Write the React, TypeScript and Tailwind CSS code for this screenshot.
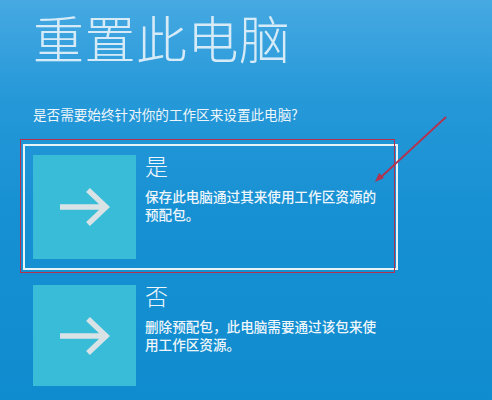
import React from "react";

const cjk = { fontFamily: '"Noto Sans CJK SC", "Noto Sans", sans-serif' };

// arrow glyph on the tile
function TileArrow() {
    return (
        <svg width="50" height="38" viewBox="0 0 50 38">
            <path d="M0 19 H44 M28 2 L46 19 L28 36" stroke="#d9e3e5" strokeWidth="5.5" fill="none" />
        </svg>
    );
}

function Option({ title, desc, h }: { title: string; desc: string[]; h: string }) {
    return (
        <div className="flex gap-[9px]">
            <div className={`w-[103px] ${h} shrink-0 bg-[#38bcd8] flex items-center justify-center`}>
                <TileArrow />
            </div>
            <div className="-mt-[4px] text-[#eef6fb]">
                <div className="text-[23px] leading-[28px] font-light">{title}</div>
                <div className="mt-[8px] text-[13.6px] leading-[18px] font-medium">
                    {desc.map((d) => (
                        <div key={d}>{d}</div>
                    ))}
                </div>
            </div>
        </div>
    );
}

export default function App() {
    return (
        <div
            style={cjk}
            className="relative w-[492px] h-[400px] overflow-hidden bg-[linear-gradient(180deg,#46a9e2_0%,#2598d8_25%,#1690d3_55%,#0f8ccf_100%)]"
        >
            <div className="px-[33px] pt-[4px]">
                {/* title */}
                <h1 className="text-[51px] leading-[66px] font-extralight tracking-[0.5px] text-[#d6ebf7]">重置此电脑</h1>
                <p className="mt-[34px] text-[13.6px] leading-[20px] text-[#eef6fb]">是否需要始终针对你的工作区来设置此电脑?</p>

                {/* selected option */}
                <div className="mt-[20px] -ml-[10px] w-[375px] border-2 border-[#e8f3f8] px-[8px] py-[9px]">
                    <Option title="是" desc={["保存此电脑通过其来使用工作区资源的", "预配包。"]} h="h-[104px]" />
                </div>

                <div className="mt-[15px]">
                    <Option title="否" desc={["删除预配包，此电脑需要通过该包来使", "用工作区资源。"]} h="h-[101px]" />
                </div>
            </div>

            {/* red annotation */}
            <div className="absolute left-[20px] top-[139px] w-[375px] h-[134px] border-[1.5px] border-[#b3334f]" />
            <svg className="absolute left-0 top-0" width="492" height="400">
                <line x1="446" y1="117" x2="380" y2="178" stroke="#b3334f" strokeWidth="1.8" />
                <path d="M375 182 L379 173 L384 178 Z" fill="#b3334f" />
            </svg>
        </div>
    );
}
